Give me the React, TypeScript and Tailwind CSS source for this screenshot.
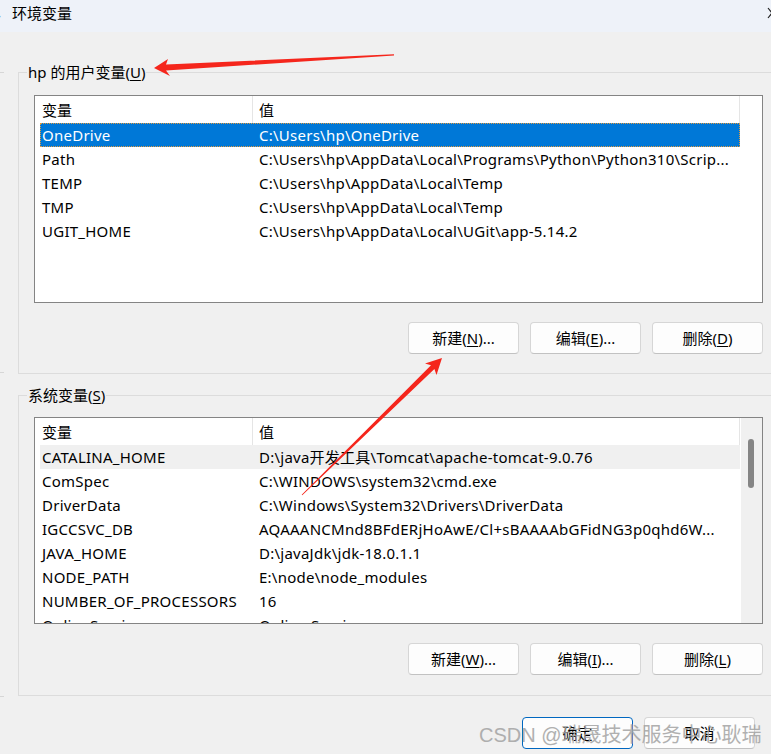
import { ReactNode } from "react";

const userVars: [string, string][] = [
  ["OneDrive", "C:\\Users\\hp\\OneDrive"],
  ["Path", "C:\\Users\\hp\\AppData\\Local\\Programs\\Python\\Python310\\Scrip..."],
  ["TEMP", "C:\\Users\\hp\\AppData\\Local\\Temp"],
  ["TMP", "C:\\Users\\hp\\AppData\\Local\\Temp"],
  ["UGIT_HOME", "C:\\Users\\hp\\AppData\\Local\\UGit\\app-5.14.2"],
];

const sysVars: [string, string][] = [
  ["CATALINA_HOME", "D:\\java开发工具\\Tomcat\\apache-tomcat-9.0.76"],
  ["ComSpec", "C:\\WINDOWS\\system32\\cmd.exe"],
  ["DriverData", "C:\\Windows\\System32\\Drivers\\DriverData"],
  ["IGCCSVC_DB", "AQAAANCMnd8BFdERjHoAwE/Cl+sBAAAAbGFidNG3p0qhd6W..."],
  ["JAVA_HOME", "D:\\javaJdk\\jdk-18.0.1.1"],
  ["NODE_PATH", "E:\\node\\node_modules"],
  ["NUMBER_OF_PROCESSORS", "16"],
  ["OnlineServices", "Online Services"],
];

const WinButton = ({ children, primary }: { children: ReactNode; primary?: boolean }) => (
  <button
    className={
      "w-[111px] h-[32px] rounded-[4px] bg-[#fdfdfd] text-[15px] text-black flex items-center justify-center border " +
      (primary ? "border-[#0067c0]" : "border-[#d6d6d6] border-b-[#c2c2c2]")
    }
  >
    {children}
  </button>
);

// mnemonic letter, underlined like the Windows dialog
const M = ({ c }: { c: string }) => <span className="underline underline-offset-2">{c}</span>;

const ListView = ({
  rows,
  selected,
  hovered,
  scroll,
  height,
}: {
  rows: [string, string][];
  selected?: number;
  hovered?: number;
  scroll?: boolean;
  height: string;
}) => (
  <div className={"w-[729px] border border-[#848484] bg-white flex overflow-hidden " + height}>
    <div className="w-[706px] flex flex-col">
      <div className="h-[27px] flex shrink-0">
        <div className="w-[218px] border-r border-[#e5e5e5] pl-[7px] pt-[1px] flex items-center">变量</div>
        <div className="w-[487px] border-r border-[#e5e5e5] pl-[6px] pt-[1px] flex items-center">值</div>
      </div>
      {rows.map(([name, value], i) => (
        <div
          key={name}
          className={
            "ml-[5px] w-[700px] h-[24px] shrink-0 flex items-center tracking-[0.25px] " +
            (i === selected
              ? "bg-[#0078d7] text-white outline-1 outline-dotted outline-[#e09a40] -outline-offset-1"
              : i === hovered
              ? "bg-[#f0f0f0]"
              : "")
          }
        >
          <div className="w-[213px] pl-[2px] whitespace-nowrap">{name}</div>
          <div className="pl-[6px] whitespace-nowrap">{value}</div>
        </div>
      ))}
    </div>
    {scroll ? (
      <div className="w-[21px] bg-[#f0f0f0]">
        <div className="ml-[7px] mt-[21px] w-[6px] h-[49px] rounded-[3px] bg-[#858585]" />
      </div>
    ) : (
      <div className="w-[21px]" />
    )}
  </div>
);

const Group = ({ label, children }: { label: ReactNode; children: ReactNode }) => (
  <div className="relative w-[770px] border border-[#dcdcdc] pl-[15px]">
    <div className="absolute left-[8px] -top-[12px] bg-[#f0f0f0] px-[1px] leading-[22px] text-[15px]">{label}</div>
    {children}
  </div>
);

export default function App() {
  return (
    <div
      className="relative w-[771px] h-[754px] overflow-hidden bg-[#f0f0f0] text-[15px] text-black"
      style={{ fontFamily: '"Noto Sans", "Noto Sans CJK SC", sans-serif' }}
    >
      {/* title bar */}
      <div className="h-[32px] bg-[#eef2f9] flex items-center justify-between">
        <div className="flex items-center">
          <span className="-ml-[3px] w-[6px] text-[12px] text-[#444]">›</span>
          <span className="ml-[9px] text-[15px] -mt-[6px]">环境变量</span>
        </div>
        <svg width="10" height="12" viewBox="0 0 10 12" className="-mr-[6px] -mt-[7px]">
          <path d="M1 1 L9 11 M9 1 L1 11" stroke="#222" strokeWidth="1.2" />
        </svg>
      </div>

      <div className="pl-[18px]">
        <div className="mt-[40px]">
          <Group
            label={
              <>
                hp 的用户变量(<M c="U" />)
              </>
            }
          >
            <div className="pt-[22px]">
              <ListView rows={userVars} selected={0} height="h-[208px]" />
            </div>
            <div className="w-[729px] mt-[19px] mb-[19px] flex justify-end gap-[11px]">
              <WinButton>
                新建(<M c="N" />)...
              </WinButton>
              <WinButton>
                编辑(<M c="E" />)...
              </WinButton>
              <WinButton>
                删除(<M c="D" />)
              </WinButton>
            </div>
          </Group>
        </div>

        <div className="mt-[21px]">
          <Group
            label={
              <>
                系统变量(<M c="S" />)
              </>
            }
          >
            <div className="pt-[21px]">
              <ListView rows={sysVars} hovered={0} scroll height="h-[207px]" />
            </div>
            <div className="w-[729px] mt-[19px] mb-[20px] flex justify-end gap-[11px]">
              <WinButton>
                新建(<M c="W" />)...
              </WinButton>
              <WinButton>
                编辑(<M c="I" />)...
              </WinButton>
              <WinButton>
                删除(<M c="L" />)
              </WinButton>
            </div>
          </Group>
        </div>
      </div>

      <div className="mt-[21px] pr-[16px] flex justify-end gap-[11px]">
        <WinButton primary>确定</WinButton>
        <WinButton>取消</WinButton>
      </div>

      {/* bits of the window behind, at the far left */}
      <div className="absolute left-0 top-[72px] w-[4px] border-t border-[#d6d6d6]" />
      <div className="absolute left-0 top-[372px] w-[4px] border-t border-[#d6d6d6]" />
      <div className="absolute left-0 top-[696px] w-[4px] border-t border-[#d6d6d6]" />

      {/* watermark */}
      <div
        className="absolute left-[479px] top-[721px] text-[20px] leading-[28px] text-[#a3a3a3] whitespace-nowrap pointer-events-none"
        style={{ fontFamily: '"Liberation Sans", "Noto Sans CJK SC", sans-serif', opacity: 0.85 }}
      >
        CSDN @瑞晟技术服务中心耿瑞
      </div>

      {/* red annotation arrows */}
      <svg className="absolute left-0 top-0 pointer-events-none" width="771" height="754">
        <polygon
          fill="#f5261c"
          points="154,68 168,59 166,64.5 394,54.3 394,55.4 166,70.5 170,76"
        />
        <polygon
          fill="#f5261c"
          points="442,358 436.5,375 434.4,368.9 302.3,495.3 301.7,494.7 431,365.3 425,363.5"
        />
      </svg>
    </div>
  );
}
